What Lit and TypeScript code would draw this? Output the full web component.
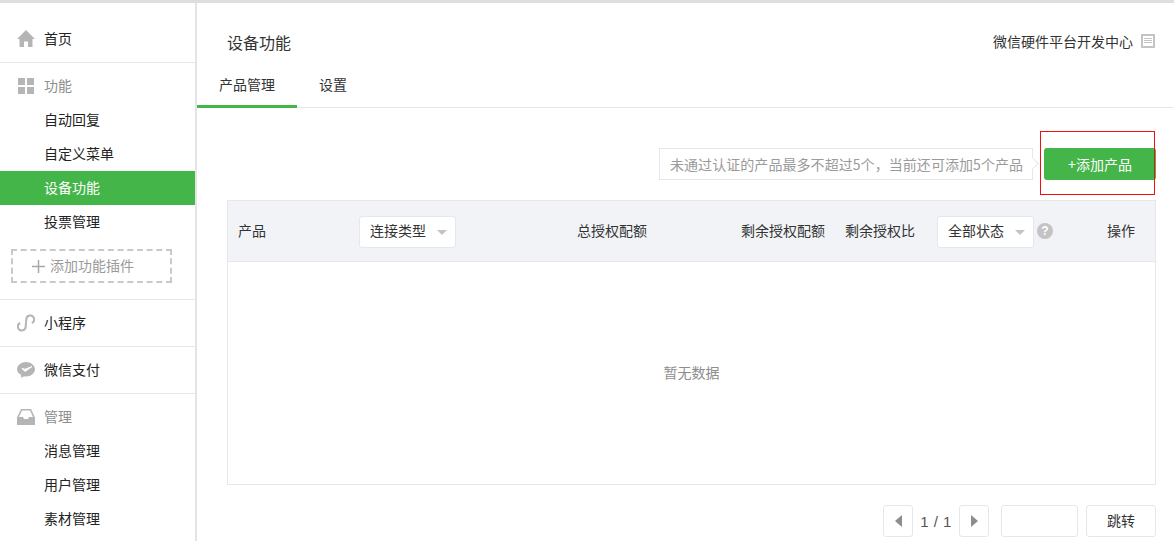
import { LitElement, html, css, svg } from "lit";
import { customElement } from "lit/decorators.js";

const home = svg`<path d="M9 0 L18 9 H15.500 V17 H11 V11.500 H7 V17 H2.500 V9 H0 Z" />`;
const grid = svg`<rect x="1" y="1" width="7" height="7"/><rect x="10" y="1" width="7" height="7"/><rect x="1" y="10" width="7" height="7"/><rect x="10" y="10" width="7" height="7"/>`;
const link = svg`<path d="M14.800 9 A3.900 3.900 0 1 0 9.300 5.500 L8.700 12.500 A3.900 3.900 0 1 1 3.200 9" fill="none" stroke="#b5b5b5" stroke-width="2"/>`;
const pay = svg`<path d="M9 1 C4.200 1 0 4.300 0 8.300 C0 10.500 1.300 12.400 3.700 13.600 L4.500 17 L7 15.300 C7.700 15.500 8.300 15.500 9 15.500 C13.800 15.500 18 12.300 18 8.300 C18 4.300 13.800 1 9 1 Z"/><path d="M5 7.500 L8 10.500 L15 5.500 L8 8.300 Z" fill="#fff" stroke="#fff" stroke-width="1"/>`;
const inbox = svg`<path d="M4 1 H14 L18 9.500 V17 H0 V9.500 Z M5 2.500 L2 9 H6 L7 11 H11 L12 9 H16 L13 2.500 Z" fill-rule="evenodd"/>`;

const icon = (p: unknown) => html`<svg class="ic" viewBox="0 0 18 18" width="18" height="18">${p}</svg>`;

@customElement("app-root")
export class AppRoot extends LitElement {
  static styles = css`
    :host { display: block; width: 1174px; height: 541px; overflow: hidden; background: #fff;
      font-family: "Noto Sans CJK SC", "Liberation Sans", sans-serif; font-size: 14px; color: #222; }
    .top { height: 3px; background: #dedee1; }
    .page { display: flex; height: 538px; }
    .side { width: 195px; flex: none; border-right: 2px solid #e4e4e7; }
    .row { display: flex; align-items: center; gap: 9px; padding-left: 17px; height: 34px; }
    .row span { line-height: 32px; padding-bottom: 2px; }
    .ic { fill: #b5b5b5; flex: none; display: block; }
    .sec { border-bottom: 1px solid #e7e7eb; box-sizing: border-box; }
    .s1 { height: 60px; padding-top: 19px; }
    .s2 { height: 237px; padding-top: 6px; }
    .s3, .s4 { height: 47px; padding-top: 6px; }
    .s5 { padding-top: 6px; border-bottom: 0; }
    .cat { color: #8d8d8d; }
    .item { display: block; height: 34px; line-height: 32px; padding-left: 44px; }
    .item.on { background: #44b549; color: #fff; }
    .add { margin: 10px 0 0 11px; width: 161px; height: 34px; box-sizing: border-box; border: 2px dashed #c9c9c9;
      display: flex; align-items: center; padding-left: 19px; gap: 5px; color: #9a9a9a; }
    .add svg { display: block; }
    .add span { line-height: 28px; padding-bottom: 2px; }
    .main { flex: 1; min-width: 0; }
    .head { display: flex; justify-content: space-between; align-items: center; height: 73px; padding: 5px 19px 0 30px; box-sizing: border-box; }
    .title { font-size: 16px; color: #333; }
    .link { display: flex; align-items: center; gap: 8px; color: #333; margin-bottom: 2px; }
    .doc { width: 14px; height: 14px; border: 2px solid #c4c4c4; padding: 2px 1px; box-sizing: border-box; display: flex; flex-direction: column; gap: 1px; }
    .doc i { display: block; height: 1px; background: #c4c4c4; }
    .tabs { display: flex; height: 31px; border-bottom: 1px solid #e7e7eb; }
    .tab { width: 100px; text-align: center; line-height: 16px; height: 32px; box-sizing: border-box; color: #333; }
    .tab.on { border-bottom: 3px solid #44b549; }
    .tab.plain { width: 72px; }
    .tool { display: flex; justify-content: flex-end; padding: 40px 18px 0 0; height: 92px; box-sizing: border-box; }
    .hint { position: relative; width: 374px; height: 32px; box-sizing: border-box; border: 1px solid #e7e7eb; padding-left: 10px;
      line-height: 30px; color: #9a9a9a; letter-spacing: 0.06px; white-space: nowrap; margin-right: 11px; }
    .hint::after { content: ""; position: absolute; right: -5px; top: 10px; width: 8px; height: 8px; background: #fff;
      border-top: 1px solid #e7e7eb; border-right: 1px solid #e7e7eb; transform: rotate(45deg); }
    .btn { width: 112px; height: 32px; background: #44b549; color: #fff; border-radius: 3px; text-align: center; line-height: 32px; position: relative; }
    .red { position: absolute; left: -4px; top: -17px; width: 115px; height: 64px; box-sizing: border-box; border: 1px solid #f01010; }
    .table { margin-left: 30px; width: 929px; height: 285px; box-sizing: border-box; border: 1px solid #e7e7eb; }
    .thead { height: 61px; background: #f1f3f7; border-bottom: 1px solid #e7e7eb; box-sizing: border-box; display: flex; align-items: center; color: #333; white-space: nowrap; }
    .c1, .c3, .c4, .c5, .op { line-height: 20px; padding-bottom: 2px; }
    .c1 { width: 131px; padding-left: 10px; box-sizing: border-box; }
    .c2 { width: 218px; margin-top: 2px; }
    .c3 { width: 164px; }
    .c4 { width: 104px; }
    .c5 { width: 92px; }
    .c6 { display: flex; align-items: center; gap: 3px; margin-top: 2px; }
    .sel { width: 97px; height: 32px; box-sizing: border-box; background: #fff; border: 1px solid #e7e7eb; border-radius: 3px;
      display: flex; align-items: center; justify-content: space-between; padding: 0 8px 0 10px; }
    .sel span { line-height: 20px; padding-bottom: 4px; }
    .tri { width: 0; height: 0; border: 5px solid transparent; border-top: 5px solid #c4c4c4; border-bottom: 0; }
    .q { width: 16px; height: 16px; border-radius: 50%; background: #c4c4c4; color: #fff; font-size: 12px; font-weight: 700; text-align: center; line-height: 16px; font-family: "Liberation Sans", sans-serif; flex: none; margin-bottom: 2px; }
    .op { margin-left: 54px; }
    .empty { height: 222px; box-sizing: border-box; padding-bottom: 2px; display: flex; align-items: center; justify-content: center; color: #8d8d8d; }
    .pager { display: flex; justify-content: flex-end; align-items: center; padding: 20px 18px 0 0; }
    .pg { width: 30px; height: 32px; box-sizing: border-box; border: 1px solid #e7e7eb; border-radius: 3px; display: flex; align-items: center; justify-content: center; }
    .l { width: 0; height: 0; border: 6px solid transparent; border-left: 0; border-right: 7px solid #8d8d8d; }
    .r { width: 0; height: 0; border: 6px solid transparent; border-right: 0; border-left: 7px solid #8d8d8d; }
    .num { width: 46px; text-align: center; color: #555; font-family: "Liberation Sans", sans-serif; font-size: 15px; letter-spacing: 0.5px; }
    .inp { width: 77px; height: 32px; box-sizing: border-box; border: 1px solid #e7e7eb; border-radius: 3px; margin: 0 8px 0 12px; }
    .go { width: 70px; height: 32px; box-sizing: border-box; border: 1px solid #e7e7eb; border-radius: 3px; text-align: center; line-height: 28px; color: #333; }
  `;

  render() {
    return html`
      <div class="top"></div>
      <div class="page">
        <nav class="side">
          <div class="sec s1"><div class="row">${icon(home)}<span>首页</span></div></div>
          <div class="sec s2">
            <div class="row cat">${icon(grid)}<span>功能</span></div>
            <span class="item">自动回复</span>
            <span class="item">自定义菜单</span>
            <span class="item on">设备功能</span>
            <span class="item">投票管理</span>
            <div class="add">
              <svg width="13" height="13" viewBox="0 0 13 13"><path d="M6.500 0 V13 M0 6.500 H13" stroke="#a8a8a8" stroke-width="1.500"/></svg>
              <span>添加功能插件</span>
            </div>
          </div>
          <div class="sec s3"><div class="row">${icon(link)}<span>小程序</span></div></div>
          <div class="sec s4"><div class="row">${icon(pay)}<span>微信支付</span></div></div>
          <div class="sec s5">
            <div class="row cat">${icon(inbox)}<span>管理</span></div>
            <span class="item">消息管理</span>
            <span class="item">用户管理</span>
            <span class="item">素材管理</span>
          </div>
        </nav>
        <main class="main">
          <div class="head">
            <span class="title">设备功能</span>
            <span class="link">微信硬件平台开发中心<span class="doc"><i></i><i></i><i></i></span></span>
          </div>
          <div class="tabs">
            <div class="tab on">产品管理</div>
            <div class="tab plain">设置</div>
          </div>
          <div class="tool">
            <div class="hint">未通过认证的产品最多不超过5个，当前还可添加5个产品</div>
            <div class="btn">+添加产品<span class="red"></span></div>
          </div>
          <div class="table">
            <div class="thead">
              <div class="c1">产品</div>
              <div class="c2"><div class="sel"><span>连接类型</span><i class="tri"></i></div></div>
              <div class="c3">总授权配额</div>
              <div class="c4">剩余授权配额</div>
              <div class="c5">剩余授权比</div>
              <div class="c6"><div class="sel"><span>全部状态</span><i class="tri"></i></div><span class="q">?</span></div>
              <div class="op">操作</div>
            </div>
            <div class="empty">暂无数据</div>
          </div>
          <div class="pager">
            <div class="pg"><i class="l"></i></div>
            <div class="num">1 / 1</div>
            <div class="pg"><i class="r"></i></div>
            <div class="inp"></div>
            <div class="go">跳转</div>
          </div>
        </main>
      </div>
    `;
  }
}
